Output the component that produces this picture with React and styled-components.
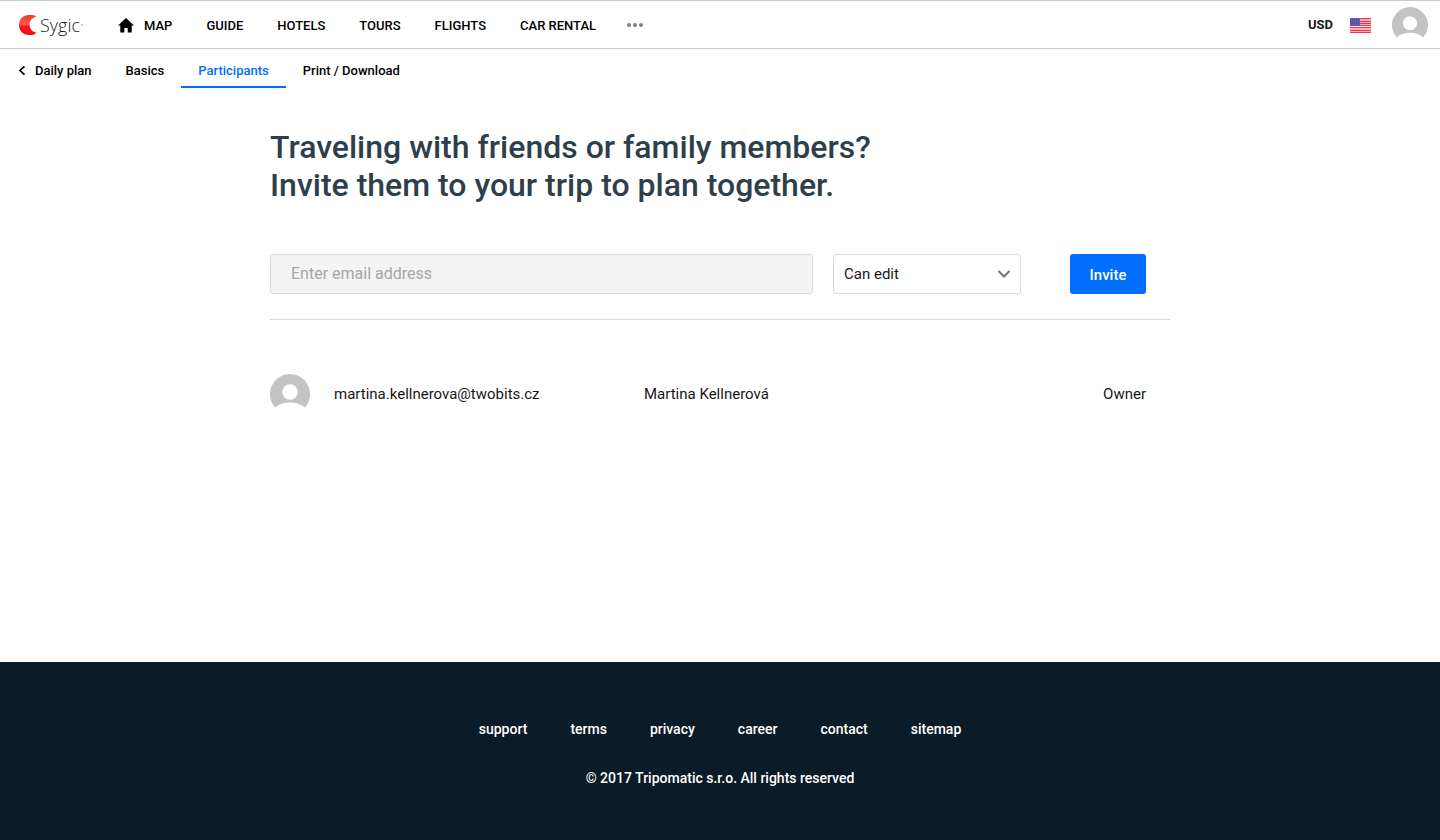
import React from "react";
import styled, { createGlobalStyle } from "styled-components";

const GlobalStyle = createGlobalStyle`
  *, *::before, *::after { box-sizing: border-box; }
  body {
    margin: 0;
    background: #fff;
    color: #171717;
    font-family: Roboto, "Liberation Sans", sans-serif;
    font-size: 15px;
    line-height: 20px;
  }
  button, input, select { font: inherit; }
  a { color: inherit; text-decoration: none; }
`;

const Page = styled.div`
  display: flex;
  flex-direction: column;
  min-height: 100vh;
`;

const Header = styled.header`
  display: flex;
  align-items: center;
  height: 49px;
  padding: 0 12px 0 18px;
  border-top: 1px solid #cbcbcb;
  border-bottom: 1px solid #cbcbcb;
`;

const Logo = styled.a`
  display: flex;
  align-items: center;
  width: 83px;
`;

const LogoMark = styled.svg`
  width: 19px;
  height: 22px;
  margin-right: 3px;
`;

const LogoText = styled.span`
  font-family: "Open Sans", sans-serif;
  font-size: 18px;
  font-weight: 300;
  line-height: 24px;
  color: #1c1c1c;
`;

const LogoDot = styled.svg`
  width: 2px;
  height: 2px;
  margin-left: 1px;
`;

const MainNav = styled.nav`
  display: flex;
  flex: 1;
`;

const NavLink = styled.a`
  display: flex;
  align-items: center;
  gap: 10px;
  padding: 15px 17px 13px;
  color: #000;
  font-size: 13px;
  font-weight: 500;
  text-transform: uppercase;
`;

const HomeIcon = styled.svg`
  width: 16px;
  height: 16px;
  fill: #000;
`;

const PlainButton = styled.button`
  display: flex;
  align-items: center;
  padding: 0;
  border: 0;
  background: none;
  color: #171717;
  cursor: pointer;
`;

const MoreButton = styled(PlainButton)`
  padding: 0 14px;
`;

const Tools = styled.div`
  display: flex;
  align-items: center;
`;

const CurrencyButton = styled(PlainButton)`
  margin-right: 17px;
  font-size: 13px;
  font-weight: 700;
`;

const LanguageButton = styled(PlainButton)`
  padding-top: 1px;
  margin-right: 21px;
`;

const AvatarSvg = styled.svg`
  display: block;
  width: ${(p) => p.$size}px;
  height: ${(p) => p.$size}px;
`;

const SubNav = styled.nav`
  display: flex;
  padding-left: 18px;
`;

const Tab = styled.a`
  display: flex;
  align-items: center;
  gap: 9px;
  padding: ${(p) => (p.$back ? "12px 17px 5px 0" : "12px 17px 5px")};
  border-bottom: 2px solid ${(p) => (p.$active ? "#006eff" : "transparent")};
  color: ${(p) => (p.$active ? "#006eff" : "#000")};
  font-size: 13px;
  font-weight: 500;
`;

const Main = styled.main`
  flex: 1;
  width: 100%;
  max-width: 900px;
  margin: 0 auto;
  padding: 40px 0;
`;

const Title = styled.h1`
  margin: 0 0 50px;
  color: #2e3f4b;
  font-size: 32px;
  font-weight: 500;
  line-height: 38px;
`;

const InviteForm = styled.form`
  display: flex;
  align-items: center;
  gap: 20px;
  padding: 0 24px 25px 0;
  border-bottom: 1px solid #dadada;
`;

const EmailInput = styled.input`
  flex: 1;
  min-width: 0;
  height: 40px;
  padding: 0 20px 2px;
  border: 1px solid #dadada;
  border-radius: 3px;
  background: #f4f4f4;
  color: #171717;
  font-size: 16px;
  &::placeholder { color: #a6a6a6; }
`;

const SelectBox = styled.div`
  display: grid;
  align-items: center;
  width: 188px;
  margin-right: 29px;
  & > * { grid-area: 1 / 1; }
`;

const Select = styled.select`
  appearance: none;
  width: 100%;
  height: 40px;
  padding: 0 10px;
  border: 1px solid #dadada;
  border-radius: 3px;
  background: #fff;
  color: #171717;
  font-size: 15px;
`;

const Chevron = styled.svg`
  justify-self: end;
  width: 14px;
  height: 10px;
  margin-right: 10px;
  pointer-events: none;
`;

const InviteButton = styled.button`
  width: 76px;
  height: 40px;
  padding: 2px 0 0;
  border: 0;
  border-radius: 3px;
  background: #006eff;
  color: #fff;
  font-size: 15px;
  font-weight: 500;
  cursor: pointer;
`;

const Participants = styled.table`
  width: 100%;
  margin-top: 54px;
  border-collapse: collapse;
  table-layout: fixed;
`;

const Cell = styled.td`
  width: ${(p) => p.$width || "auto"};
  padding: ${(p) => (p.$end ? "0 24px 0 0" : "0")};
  text-align: ${(p) => (p.$end ? "right" : "left")};
`;

const Footer = styled.footer`
  display: flex;
  flex-direction: column;
  align-items: center;
  gap: 29px;
  padding: 57px 20px 52px;
  background: #0b1b28;
  color: #fff;
  font-size: 14px;
  font-weight: 500;
`;

const FooterLinks = styled.nav`
  display: flex;
  gap: 43px;
`;

const Copyright = styled.p`
  margin: 0;
`;

const navItems = ["Guide", "Hotels", "Tours", "Flights", "Car rental"];
const footerItems = ["support", "terms", "privacy", "career", "contact", "sitemap"];

function Avatar({ size }) {
  return (
    <AvatarSvg $size={size} viewBox="0 0 40 40" aria-hidden="true">
      <path
        fill="#c3c3c3"
        fillRule="evenodd"
        d="M20 0A20 20 0 0 1 34.8 33.5C31.2 30.3 25.8 28.6 20 28.6S8.800 30.300 5.200 33.500A20 20 0 0 1 20 0ZM20 10.200A7.800 7.800 0 1 0 20 25.800A7.800 7.800 0 1 0 20 10.200Z"
      />
    </AvatarSvg>
  );
}

function Flag() {
  return (
    <svg width="21" height="15" viewBox="0 0 21 15" aria-hidden="true">
      <rect width="21" height="15" fill="#ffb3bb" />
      {[0, 3, 5, 7, 9, 12, 14].map((y) => (
        <rect key={y} y={y} width="21" height="1" fill="#fb3048" />
      ))}
      <rect y="8" width="21" height="1" fill="#ffeef0" />
      <rect width="10" height="8" fill="#5a51a5" />
      {[1, 3, 5, 7].map((y) => (
        <path key={y} d={`M1 ${y - 0.5}H10`} stroke="#7a72ba" strokeWidth="0.7" strokeDasharray="1 1" />
      ))}
    </svg>
  );
}

export default function App() {
  return (
    <Page>
      <GlobalStyle />
      <Header>
        <Logo href="#" aria-label="Sygic">
          <LogoMark viewBox="0 0 19 22" aria-hidden="true">
            <defs>
              <linearGradient id="mark" x1="0" y1="0" x2="0" y2="1">
                <stop offset="0" stopColor="#e8392c" />
                <stop offset="0.45" stopColor="#ff5a4c" />
                <stop offset="0.6" stopColor="#fa0f1a" />
                <stop offset="1" stopColor="#e3121c" />
              </linearGradient>
            </defs>
            <path
              fill="url(#mark)"
              d="M11 1H14C16 1 17.500 1.700 18 2.800C13.800 4 11.600 7 11.600 10.800S13.800 17.600 18 18.600C17.300 20.200 16 21 14 21H11C5 21 1 16.700 1 11S5 1 11 1Z"
            />
          </LogoMark>
          <LogoText>Sygic</LogoText>
          <LogoDot viewBox="0 0 2 2" aria-hidden="true">
            <circle cx="1" cy="1" r="1" fill="#bbb" />
          </LogoDot>
        </Logo>
        <MainNav aria-label="Main">
          <NavLink href="#">
            <HomeIcon viewBox="0 0 16 16" aria-hidden="true">
              <path d="M8 0L16 7.500H13.700V14.500H9.700V10H6.300V14.500H2.300V7.500H0Z" />
            </HomeIcon>
            Map
          </NavLink>
          {navItems.map((item) => (
            <NavLink key={item} href="#">{item}</NavLink>
          ))}
          <MoreButton type="button" aria-label="More">
            <svg width="16" height="4" viewBox="0 0 16 4" fill="#808080" aria-hidden="true">
              <circle cx="2" cy="2" r="2" />
              <circle cx="8" cy="2" r="2" />
              <circle cx="14" cy="2" r="2" />
            </svg>
          </MoreButton>
        </MainNav>
        <Tools>
          <CurrencyButton type="button">USD</CurrencyButton>
          <LanguageButton type="button" aria-label="Language"><Flag /></LanguageButton>
          <PlainButton type="button" aria-label="Account"><Avatar size={36} /></PlainButton>
        </Tools>
      </Header>
      <SubNav aria-label="Trip">
        <Tab href="#" $back>
          <svg width="8" height="10" viewBox="0 0 8 10" fill="none" stroke="#000" strokeWidth="1.7" aria-hidden="true">
            <path d="M6.500 0.300L2 4.500L6.500 8.700" />
          </svg>
          Daily plan
        </Tab>
        <Tab href="#">Basics</Tab>
        <Tab href="#" $active aria-current="page">Participants</Tab>
        <Tab href="#">Print / Download</Tab>
      </SubNav>
      <Main>
        <Title>
          Traveling with friends or family members?
          <br />
          Invite them to your trip to plan together.
        </Title>
        <InviteForm onSubmit={(e) => e.preventDefault()}>
          <EmailInput type="email" placeholder="Enter email address" aria-label="Email address" />
          <SelectBox>
            <Select aria-label="Permission" defaultValue="edit">
              <option value="edit">Can edit</option>
              <option value="view">Can view</option>
            </Select>
            <Chevron viewBox="0 0 14 10" fill="none" stroke="#757575" strokeWidth="2" aria-hidden="true">
              <path d="M1.500 2L7 7.500L12.500 2" />
            </Chevron>
          </SelectBox>
          <InviteButton type="submit">Invite</InviteButton>
        </InviteForm>
        <Participants aria-label="Participants">
          <tbody>
            <tr>
              <Cell $width="64px"><Avatar size={40} /></Cell>
              <Cell $width="310px">martina.kellnerova@twobits.cz</Cell>
              <Cell>Martina Kellnerová</Cell>
              <Cell $end>Owner</Cell>
            </tr>
          </tbody>
        </Participants>
      </Main>
      <Footer>
        <FooterLinks aria-label="Footer">
          {footerItems.map((item) => (
            <a key={item} href="#">{item}</a>
          ))}
        </FooterLinks>
        <Copyright>© 2017 Tripomatic s.r.o. All rights reserved</Copyright>
      </Footer>
    </Page>
  );
}
